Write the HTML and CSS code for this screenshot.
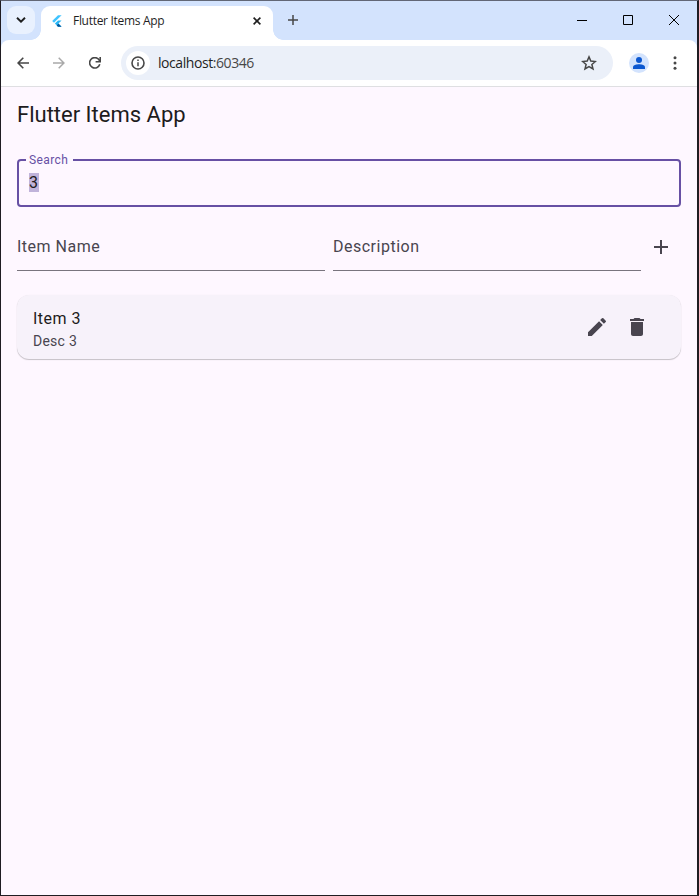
FILE: index.html
```html
<!DOCTYPE html>
<html lang="en">
<head>
<meta charset="utf-8">
<title>Flutter Items App</title>
<link rel="stylesheet" href="styles.css">
</head>
<body>
<div class="window">
  <header class="tabstrip">
    <button class="tab-search" aria-label="Search tabs"><svg width="10" height="6" viewBox="0 0 10 6"><path d="M1 .8 5 4.7 9 .8" fill="none" stroke="#1f1f1f" stroke-width="1.9"/></svg></button>
    <div class="tab">
      <svg class="favicon" width="16" height="16" viewBox="0 0 16 16"><path d="M9 2.2 3.2 8l1.8 1.8 7.6-7.6z" fill="#40c4ff"/><path d="M9 7.5 5.9 10.6 9 13.8h3.6l-3.2-3.2 3.2-3.1z" fill="#29b6f6"/><path d="m7.7 12.4 1.3 1.4h3.6l-3.2-3.2z" fill="#01579b"/></svg>
      <span class="tab-title">Flutter Items App</span>
      <svg class="tab-close" width="8" height="8" viewBox="0 0 8 8"><path d="m.6.6 6.8 6.8M7.4.6.6 7.4" stroke="#1f1f1f" stroke-width="1.6"/></svg>
    </div>
    <svg class="new-tab" width="10" height="10" viewBox="0 0 10 10"><path d="M5 0v10M0 5h10" stroke="#474747" stroke-width="1.5"/></svg>
    <div class="controls">
      <span><svg width="10" height="10" viewBox="0 0 10 10"><path d="M0 5.5h10" stroke="#000"/></svg></span>
      <span><svg width="10" height="10" viewBox="0 0 10 10"><path d="M.5.5h9v9h-9z" fill="none" stroke="#000"/></svg></span>
      <span><svg width="10" height="10" viewBox="0 0 10 10"><path d="m0 0 10 10M10 0 0 10" stroke="#000"/></svg></span>
    </div>
  </header>
  <nav class="toolbar">
    <svg class="nav-icon" width="12" height="12" viewBox="0 0 12 12"><path d="M12 6H1.2M6.3.8 1.1 6l5.2 5.2" fill="none" stroke="#474747" stroke-width="1.6"/></svg>
    <svg class="nav-icon" width="12" height="12" viewBox="0 0 12 12"><path d="M0 6h10.8M5.7.8 10.9 6l-5.2 5.2" fill="none" stroke="#a9a9a9" stroke-width="1.5"/></svg>
    <svg class="nav-icon" width="12" height="12" viewBox="0 0 12 12"><path d="M10.8 7.3A5.2 5.2 0 1 1 10.2 3L11 4.5" fill="none" stroke="#474747" stroke-width="1.6"/><path d="M11.2 0v4.7H6.6" fill="none" stroke="#474747" stroke-width="1.6"/></svg>
    <div class="omnibox">
      <span class="site-info"><svg width="14" height="14" viewBox="0 0 14 14"><circle cx="7" cy="7" r="6" fill="none" stroke="#474747" stroke-width="1.6"/><path d="M7 6.2v4M7 3.6v1.5" stroke="#474747" stroke-width="1.5"/></svg></span>
      <span class="url">localhost<span class="port">:60346</span></span>
      <svg class="star" width="16" height="16" viewBox="0 0 16 16"><path d="m8 1.9 1.8 4.2 4.6.4-3.5 3 1.1 4.5-4-2.4L4 14l1.1-4.5-3.5-3 4.6-.4z" fill="none" stroke="#474747" stroke-width="1.5"/></svg>
    </div>
    <span class="avatar"><svg width="12" height="12" viewBox="0 0 12 12" fill="#0b57d0"><circle cx="6" cy="3" r="3"/><path d="M0 12v-1.7C0 8.1 3.5 7.3 6 7.3s6 .8 6 3V12z"/></svg></span>
    <svg class="more" width="4" height="14" viewBox="0 0 4 14" fill="#474747"><circle cx="2" cy="1.7" r="1.5"/><circle cx="2" cy="7" r="1.5"/><circle cx="2" cy="12.3" r="1.5"/></svg>
  </nav>
  <main class="page">
    <h1>Flutter Items App</h1>
    <fieldset class="search"><legend>Search</legend><span class="selection">3</span></fieldset>
    <div class="entry">
      <div class="field">Item Name</div>
      <div class="field">Description</div>
      <button class="icon-button" aria-label="Add item"><svg width="24" height="24" viewBox="0 0 24 24" fill="#49454f"><path d="M19 13h-6v6h-2v-6H5v-2h6V5h2v6h6v2z"/></svg></button>
    </div>
    <section class="card">
      <div class="card-text"><div class="title">Item 3</div><div class="desc">Desc 3</div></div>
      <button class="icon-button" aria-label="Edit"><svg width="24" height="24" viewBox="0 0 24 24" fill="#49454f"><path d="M3 17.25V21h3.75L17.81 9.94l-3.75-3.75L3 17.25zM20.71 7.04a1 1 0 0 0 0-1.41l-2.34-2.34a1 1 0 0 0-1.41 0l-1.83 1.83 3.75 3.75 1.83-1.83z"/></svg></button>
      <button class="icon-button" aria-label="Delete"><svg width="24" height="24" viewBox="0 0 24 24" fill="#49454f"><path d="M6 19c0 1.1.9 2 2 2h8c1.1 0 2-.9 2-2V7H6v12zM19 4h-3.5l-1-1h-5l-1 1H5v2h14V4z"/></svg></button>
    </section>
  </main>
</div>
</body>
</html>
```
FILE: styles.css
```css
* { box-sizing: border-box; }
body { margin: 0; font-family: Roboto, sans-serif; }
svg { display: block; flex: none; }
button { border: 0; padding: 0; background: none; }
.window {
  width: 699px; height: 896px; display: flex; flex-direction: column;
  border: solid #1f1c22; border-width: 1px 2px 1px 1px; border-top-color: #626776;
  background: #d3e3fd; overflow: hidden;
}
.tabstrip { height: 39px; flex: none; display: flex; align-items: flex-start; }
.tab-search {
  width: 28px; height: 28px; margin: 5px 6px 0; border-radius: 9px; background: #e9f1fe;
  display: flex; align-items: center; justify-content: center;
}
.tab {
  position: relative; width: 232px; height: 34px; margin-top: 5px; padding: 0 12px 5px 8px;
  display: flex; align-items: center; background: #fff; border-radius: 9px 9px 0 0;
}
.tab::before, .tab::after { content: ""; position: absolute; bottom: 0; width: 10px; height: 10px; }
.tab::before { left: -10px; background: radial-gradient(circle at 0 0, transparent 9.5px, #fff 10px); }
.tab::after { right: -10px; background: radial-gradient(circle at 100% 0, transparent 9.5px, #fff 10px); }
.tab-title { margin-left: 8px; flex: 1; font: 12px/16px "Open Sans", sans-serif; letter-spacing: -.3px; color: #1f1f1f; white-space: nowrap; }
.new-tab { margin: 14px 0 0 15px; }
.controls { display: flex; margin-left: auto; }
.controls span { width: 46px; height: 39px; display: flex; justify-content: center; padding-top: 14px; }
.toolbar {
  height: 47px; flex: none; display: flex; align-items: center; background: #fff;
  border-bottom: 1px solid #dfdfe2; border-radius: 8px 8px 0 0; padding-left: 16px;
}
.nav-icon { margin-right: 24px; }
.omnibox {
  width: 492px; height: 34px; margin-left: -4px; padding: 0 16px 0 5px; border-radius: 17px;
  background: #ebf0f9; display: flex; align-items: center;
}
.site-info { width: 24px; height: 24px; border-radius: 50%; background: #fff; display: flex; align-items: center; justify-content: center; }
.url { margin-left: 8px; flex: 1; font: 14px/20px "Open Sans", sans-serif; letter-spacing: -.43px; color: #1f1f1f; }
.port { color: #474747; }
.avatar { width: 20px; height: 20px; margin-left: 16px; border-radius: 50%; background: #d3e3fd; display: flex; align-items: center; justify-content: center; }
.more { margin-left: 24px; }
.page { flex: 1; padding: 0 16px; background: #fef7ff; }
h1 { margin: 0; padding-top: 14px; height: 66px; font: 400 22px/28px Roboto, sans-serif; color: #1d1b20; }
.search {
  min-width: 0; height: 54px; margin: 0; padding: 6px 10px 0; border: 2px solid #6750a4; border-radius: 4px;
}
.search legend { height: 14px; margin-left: -3px; padding: 0 5px 0 3px; font-size: 12px; line-height: 14px; letter-spacing: .4px; color: #6750a4; }
.selection { display: block; width: 10px; height: 19px; background: #c0b3da; font-size: 16px; line-height: 19px; color: #1d1b20; }
.entry { display: flex; gap: 8px; height: 48px; margin-top: 16px; }
.field { flex: 1; border-bottom: 1px solid #79747e; font-size: 16px; line-height: 47px; letter-spacing: .5px; color: #49454f; }
.entry .icon-button { margin-left: -8px; }
.icon-button { width: 40px; display: flex; align-items: center; justify-content: center; }
.card {
  height: 64px; margin-top: 24px; padding: 0 24px 0 16px; display: flex; background: #f7f2fa;
  border-radius: 12px; box-shadow: 0 1px 1px rgb(0 0 0 / 22%), 0 0 1px rgb(0 0 0 / 8%);
}
.card-text { flex: 1; padding-top: 12px; }
.title { font-size: 16px; line-height: 24px; letter-spacing: .5px; color: #1d1b20; }
.desc { font-size: 14px; line-height: 20px; letter-spacing: .25px; color: #49454f; }
```
